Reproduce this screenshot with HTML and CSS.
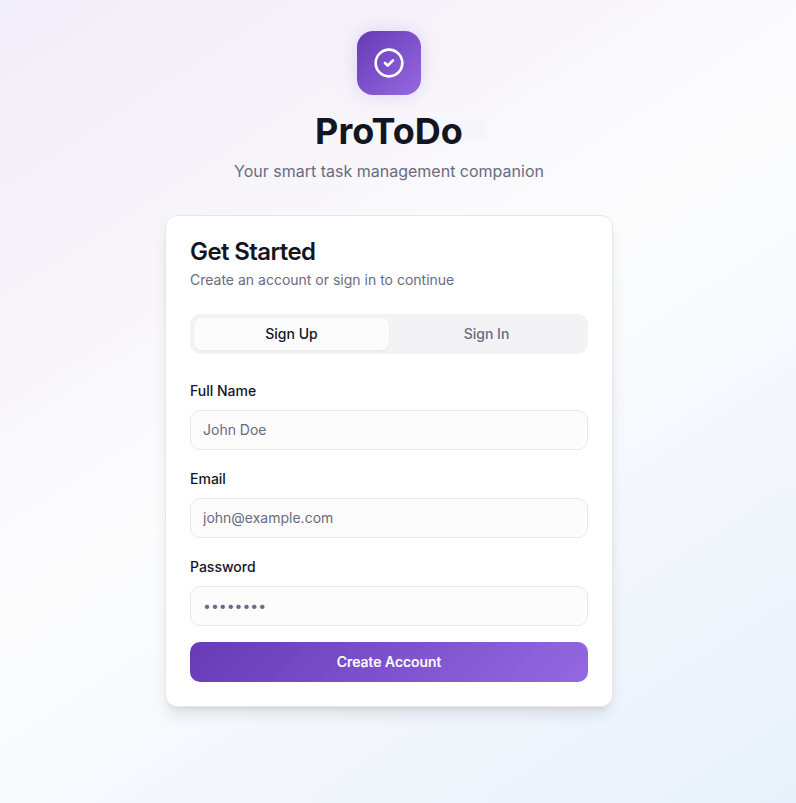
FILE: index.html
```html
<!DOCTYPE html>
<html lang="en">
<head>
<meta charset="utf-8">
<title>ProToDo</title>
<link rel="stylesheet" href="styles.css">
</head>
<body>
<main class="page">
  <header class="brand">
    <div class="logo">
      <svg width="32" height="32" viewBox="0 0 24 24" fill="none" stroke="currentColor" stroke-width="2" stroke-linecap="round" stroke-linejoin="round"><circle cx="12" cy="12" r="10"/><path d="m9 12 2 2 4-4"/></svg>
    </div>
    <h1 class="name">ProToDo</h1>
    <p class="tagline">Your smart task management companion</p>
  </header>
  <section class="card">
    <h2 class="card-title">Get Started</h2>
    <p class="card-text">Create an account or sign in to continue</p>
    <div class="tabs">
      <button class="tab tab-active" type="button">Sign Up</button>
      <button class="tab" type="button">Sign In</button>
    </div>
    <form class="form">
      <div class="field"><label for="name">Full Name</label><input id="name" type="text" placeholder="John Doe"></div>
      <div class="field"><label for="email">Email</label><input id="email" type="email" placeholder="john@example.com"></div>
      <div class="field"><label for="password">Password</label><input id="password" type="password" placeholder="••••••••"></div>
      <button class="submit" type="button">Create Account</button>
    </form>
  </section>
</main>
</body>
</html>
```
FILE: styles.css
```css
* { box-sizing: border-box; margin: 0; }
body {
  font: 16px/24px Inter, "Liberation Sans", sans-serif;
  color: #14151f;
}
.page {
  position: relative;
  z-index: 0;
  min-height: 803px;
  padding: 31px 18px 0 0;
  display: flex;
  flex-direction: column;
  align-items: center;
  background: linear-gradient(147deg, #f1eefb 0%, #f4f1f8 13%, #fcfcfd 48%, #e8f1fb 100%);
}
.brand {
  display: flex;
  flex-direction: column;
  align-items: center;
  margin-bottom: 32px;
}
.logo {
  width: 64px;
  height: 64px;
  margin-bottom: 16px;
  display: grid;
  place-items: center;
  border-radius: 16px;
  color: #fff;
  background: linear-gradient(135deg, #673ab7, #9469e0);
  box-shadow: 0 0 20px rgba(124, 77, 220, .2);
}
.logo svg { display: block; }
.name {
  position: relative;
  margin-bottom: 8px;
  font-size: 36px;
  line-height: 40px;
  font-weight: 700;
}
.name::before {
  content: "";
  position: absolute;
  z-index: -1;
  left: -1px;
  right: -22px;
  top: 7px;
  height: 22px;
  background: linear-gradient(90deg, #f7f6fb, #f5f6fc);
}
.tagline { color: #696b80; }
.card {
  width: 448px;
  padding: 24px;
  border: 1px solid #e6e7eb;
  border-radius: 12px;
  background: #fff;
  box-shadow: 0 10px 15px -3px rgba(0, 0, 0, .1), 0 4px 6px -4px rgba(0, 0, 0, .1);
}
.card-title {
  margin-bottom: 6px;
  font-size: 24px;
  line-height: 24px;
  font-weight: 600;
  letter-spacing: -.6px;
}
.card-text {
  margin-bottom: 24px;
  font-size: 14px;
  line-height: 20px;
  color: #696b80;
}
.tabs {
  display: grid;
  grid-template-columns: 1fr 1fr;
  height: 40px;
  padding: 4px;
  margin-bottom: 24px;
  border-radius: 10px;
  background: #f3f3f6;
}
.tab {
  border: 0;
  border-radius: 8px;
  background: none;
  font: 500 14px/20px Inter, sans-serif;
  color: #696b80;
}
.tab-active {
  background: #fcfcfc;
  color: #14151f;
  box-shadow: 0 1px 2px rgba(0, 0, 0, .05);
}
.form { display: flex; flex-direction: column; gap: 16px; }
.field { display: flex; flex-direction: column; gap: 8px; }
.field label { font-size: 14px; font-weight: 500; line-height: 24px; padding-top: 1px; height: 24px; }
.field input {
  width: 100%;
  height: 40px;
  padding: 7px 12px 9px;
  border: 1px solid #e6e7eb;
  border-radius: 10px;
  background: #fcfcfc;
  font: 14px/20px Inter, sans-serif;
}
.field input::placeholder { color: #696b80; opacity: 1; }
.submit {
  height: 40px;
  border: 0;
  border-radius: 10px;
  background: linear-gradient(135deg, #673ab7, #9469e0);
  color: #fff;
  font: 500 14px/20px Inter, sans-serif;
  -webkit-text-stroke: .2px #fff;
}
```
